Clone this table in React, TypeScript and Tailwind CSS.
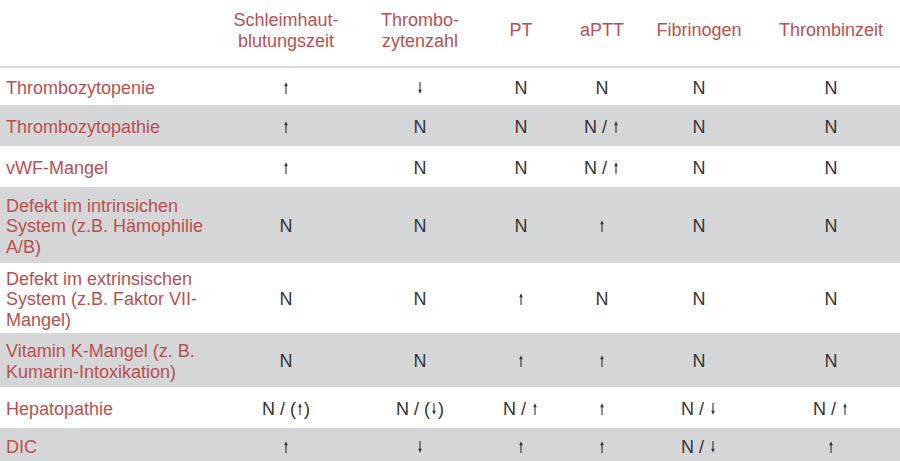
import React from 'react';

// --- Types ---
type Row = {
    label: React.ReactNode;
    values: string[];
    height: string;
    shaded: boolean;
};

const headers: React.ReactNode[] = [
    <>Schleimhaut-<br />blutungszeit</>,
    <>Thrombo-<br />zytenzahl</>,
    'PT',
    'aPTT',
    'Fibrinogen',
    'Thrombinzeit',
];

const rows: Row[] = [
    { label: 'Thrombozytopenie', values: ['↑', '↓', 'N', 'N', 'N', 'N'], height: 'h-[37px]', shaded: false },
    { label: 'Thrombozytopathie', values: ['↑', 'N', 'N', 'N / ↑', 'N', 'N'], height: 'h-[41px]', shaded: true },
    { label: 'vWF-Mangel', values: ['↑', 'N', 'N', 'N / ↑', 'N', 'N'], height: 'h-[41px]', shaded: false },
    {
        label: <>Defekt im intrinsichen<br />System (z.B. Hämophilie<br />A/B)</>,
        values: ['N', 'N', 'N', '↑', 'N', 'N'],
        height: 'h-[76px]',
        shaded: true,
    },
    {
        label: <>Defekt im extrinsischen<br />System (z.B. Faktor VII-<br />Mangel)</>,
        values: ['N', 'N', '↑', 'N', 'N', 'N'],
        height: 'h-[70px]',
        shaded: false,
    },
    {
        label: <>Vitamin K-Mangel (z. B.<br />Kumarin-Intoxikation)</>,
        values: ['N', 'N', '↑', '↑', 'N', 'N'],
        height: 'h-[54px]',
        shaded: true,
    },
    { label: 'Hepatopathie', values: ['N / (↑)', 'N / (↓)', 'N / ↑', '↑', 'N / ↓', 'N / ↑'], height: 'h-[41px]', shaded: false },
    { label: 'DIC', values: ['↑', '↓', '↑', '↑', 'N / ↓', '↑'], height: 'h-[36px]', shaded: true },
];

const gridCols = 'grid grid-cols-[219px_134px_134px_68px_94px_100px_151px]';

// last column sits a bit right of its cell centre
const cellPad = (i: number) => (i === 5 ? 'pl-[13px]' : '');

// thin arrow glyph, the font's own arrow looks too heavy
const Arrow: React.FC<{ down?: boolean }> = ({ down }) => (
    <svg
        width="6"
        height="12"
        viewBox="0 0 6 12"
        className={`inline-block align-baseline mx-[1px] ${down ? 'rotate-180' : ''}`}
        aria-label={down ? '↓' : '↑'}
    >
        <line x1="3" y1="3" x2="3" y2="12" stroke="currentColor" strokeWidth="1.1" />
        <path d="M3 0.3 L1.2 4.2 L4.8 4.2 Z" fill="currentColor" />
    </svg>
);

const renderValue = (v: string) =>
    Array.from(v).map((ch, i) =>
        ch === '↑' ? <Arrow key={i} /> : ch === '↓' ? <Arrow key={i} down /> : <React.Fragment key={i}>{ch}</React.Fragment>
    );

const App: React.FC = () => {
    return (
        <div className="w-[900px] h-[461px] overflow-hidden bg-white font-['Liberation_Sans',Arial,sans-serif] text-[18px] leading-[20.5px]">
            {/* Header */}
            <div className={`${gridCols} h-[66px] items-center pb-[5px] text-[#b9504f]`}>
                <div />
                {headers.map((h, i) => (
                    <div key={i} className={`text-center ${cellPad(i)}`}>{h}</div>
                ))}
            </div>
            <div className="h-[2px] bg-[#dadada]" />

            {/* Body */}
            {rows.map((row, r) => (
                <div
                    key={r}
                    className={`${gridCols} ${row.height} items-center pt-[3px] ${row.shaded ? 'bg-[#d5d6d8]' : 'bg-white'}`}
                >
                    <div className="pl-[6px] text-[#b9504f] whitespace-nowrap">{row.label}</div>
                    {row.values.map((v, i) => (
                        <div key={i} className={`text-center text-[#333333] whitespace-nowrap ${cellPad(i)}`}>
                            {renderValue(v)}
                        </div>
                    ))}
                </div>
            ))}
        </div>
    );
};

export default App;
